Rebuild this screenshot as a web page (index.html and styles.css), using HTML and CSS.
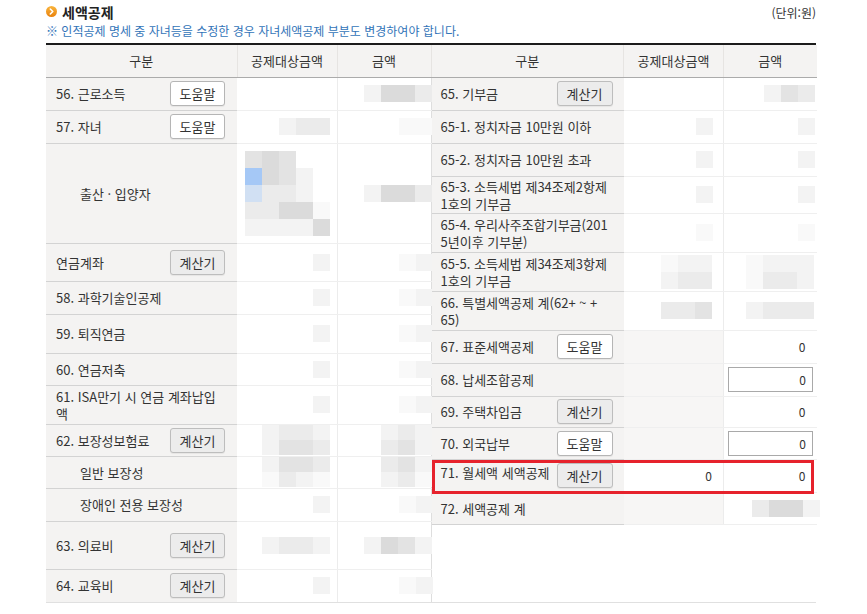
FILE: index.html
```html
<!DOCTYPE html>
<html lang="ko">
<head>
<meta charset="utf-8">
<title>세액공제</title>
<link rel="stylesheet" href="styles.css">
</head>
<body>
<div class="page">
  <div class="top">
    <div class="title">
      <svg class="ico" width="11" height="11" viewBox="0 0 11 11">
        <defs>
          <linearGradient id="og" x1="0" y1="0" x2="0" y2="1">
            <stop offset="0" stop-color="#f9b53e"/>
            <stop offset="1" stop-color="#e9820c"/>
          </linearGradient>
        </defs>
        <circle cx="5.5" cy="5.5" r="5.5" fill="url(#og)"/>
        <path d="M4.3 3 L6.8 5.5 L4.3 8" fill="none" stroke="#fff" stroke-width="1.6" stroke-linecap="round" stroke-linejoin="round"/>
      </svg>
      <span>세액공제</span>
    </div>
    <div class="unit">(단위:원)</div>
  </div>
  <div class="note">※ 인적공제 명세 중 자녀등을 수정한 경우 자녀세액공제 부분도 변경하여야 합니다.</div>

  <div class="grid">
    <table class="tbl left">
      <colgroup><col class="c-k"><col class="c-a"><col class="c-b"></colgroup>
      <thead>
        <tr><th>구분</th><th>공제대상금액</th><th>금액</th></tr>
      </thead>
      <tbody>
        <tr class="h33">
          <td class="k"><div class="lbl"><span>56. 근로소득</span><button class="btn">도움말</button></div></td>
          <td class="v"></td>
          <td class="v"><div class="mz c4 ml26"><i class="m1"></i><i class="m4"></i><i class="m4"></i><i class="m2"></i></div></td>
        </tr>
        <tr class="h33">
          <td class="k"><div class="lbl"><span>57. 자녀</span><button class="btn">도움말</button></div></td>
          <td class="v"><div class="mz c3 ml42"><i class="m1"></i><i class="m2"></i><i class="m2"></i></div></td>
          <td class="v"><div class="mz c2 ml61"><i class="m0"></i><i class="m0"></i></div></td>
        </tr>
        <tr class="h100">
          <td class="k ind">출산 · 입양자</td>
          <td class="v"><div class="mz c5 ml8">
            <i class="m3"></i><i class="m4"></i><i class="m3"></i><i></i><i></i>
            <i class="mb"></i><i class="m4"></i><i class="m3"></i><i class="m1"></i><i></i>
            <i class="mc"></i><i class="m2"></i><i class="m2"></i><i class="m1"></i><i></i>
            <i class="m2"></i><i class="m2"></i><i class="m4"></i><i class="m4"></i><i class="m0"></i>
            <i class="m1"></i><i class="m1"></i><i class="m1"></i><i class="m1"></i><i class="m4"></i>
          </div></td>
          <td class="v"><div class="mz c4 ml26"><i class="m1"></i><i class="m4"></i><i class="m4"></i><i class="m2"></i></div></td>
        </tr>
        <tr class="h38">
          <td class="k"><div class="lbl"><span>연금계좌</span><button class="btn calc">계산기</button></div></td>
          <td class="v"><div class="mz c1 ml76"><i class="m1"></i></div></td>
          <td class="v"><div class="mz c2 ml61"><i class="m0"></i><i class="m1"></i></div></td>
        </tr>
        <tr class="h33">
          <td class="k">58. 과학기술인공제</td>
          <td class="v"><div class="mz c1 ml76"><i class="m1"></i></div></td>
          <td class="v"><div class="mz c2 ml61"><i class="m0"></i><i class="m1"></i></div></td>
        </tr>
        <tr class="h39">
          <td class="k">59. 퇴직연금</td>
          <td class="v"><div class="mz c1 ml76"><i class="m1"></i></div></td>
          <td class="v"><div class="mz c2 ml61"><i class="m0"></i><i class="m1"></i></div></td>
        </tr>
        <tr class="h32">
          <td class="k">60. 연금저축</td>
          <td class="v"><div class="mz c1 ml76"><i class="m1"></i></div></td>
          <td class="v"><div class="mz c2 ml61"><i class="m0"></i><i class="m1"></i></div></td>
        </tr>
        <tr class="h39">
          <td class="k">61. ISA만기 시 연금 계좌납입<br>액</td>
          <td class="v"><div class="mz c1 ml76"><i class="m1"></i></div></td>
          <td class="v"><div class="mz c2 ml61"><i class="m0"></i><i class="m1"></i></div></td>
        </tr>
        <tr class="h32">
          <td class="k"><div class="lbl"><span>62. 보장성보험료</span><button class="btn calc">계산기</button></div></td>
          <td class="v"><div class="mz c4 ml25 r15"><i class="m1"></i><i class="m2"></i><i class="m2"></i><i class="m1"></i><i class="m1"></i><i class="m3"></i><i class="m3"></i><i class="m2"></i></div></td>
          <td class="v"><div class="mz c3 ml43 r15"><i class="m1"></i><i class="m2"></i><i class="m1"></i><i class="m2"></i><i class="m3"></i><i class="m1"></i></div></td>
        </tr>
        <tr class="h32">
          <td class="k ind">일반 보장성</td>
          <td class="v"><div class="mz c4 ml25 r15"><i class="m1"></i><i class="m3"></i><i class="m3"></i><i class="m2"></i><i class="m0"></i><i class="m2"></i><i class="m1"></i><i class="m0"></i></div></td>
          <td class="v"><div class="mz c3 ml43 r15"><i class="m2"></i><i class="m3"></i><i class="m1"></i><i class="m1"></i><i class="m2"></i><i class="m0"></i></div></td>
        </tr>
        <tr class="h33">
          <td class="k ind">장애인 전용 보장성</td>
          <td class="v"><div class="mz c1 ml76"><i class="m1"></i></div></td>
          <td class="v"><div class="mz c2 ml61"><i class="m0"></i><i class="m1"></i></div></td>
        </tr>
        <tr class="h48">
          <td class="k"><div class="lbl"><span>63. 의료비</span><button class="btn calc">계산기</button></div></td>
          <td class="v"><div class="mz c4 ml25"><i class="m1"></i><i class="m2"></i><i class="m2"></i><i class="m1"></i></div></td>
          <td class="v"><div class="mz c4 ml26"><i class="m1"></i><i class="m4"></i><i class="m3"></i><i class="m1"></i></div></td>
        </tr>
        <tr class="h33 last">
          <td class="k"><div class="lbl"><span>64. 교육비</span><button class="btn calc">계산기</button></div></td>
          <td class="v"><div class="mz c1 ml76"><i class="m1"></i></div></td>
          <td class="v"><div class="mz c2 ml61"><i class="m0"></i><i class="m1"></i></div></td>
        </tr>
      </tbody>
    </table>

    <div class="rpanel">
      <table class="tbl right">
        <colgroup><col class="c-k2"><col class="c-a"><col class="c-b2"></colgroup>
        <thead>
          <tr><th>구분</th><th>공제대상금액</th><th class="end">금액</th></tr>
        </thead>
        <tbody>
          <tr class="h33">
            <td class="k"><div class="lbl"><span>65. 기부금</span><button class="btn calc w56">계산기</button></div></td>
            <td class="v"></td>
            <td class="v end"><div class="mz c3 ml40"><i class="m1"></i><i class="m3"></i><i class="m2"></i></div></td>
          </tr>
          <tr class="h33">
            <td class="k">65-1. 정치자금 10만원 이하</td>
            <td class="v"><div class="mz c1 ml72"><i class="m1"></i></div></td>
            <td class="v end"><div class="mz c1 ml74"><i class="m1"></i></div></td>
          </tr>
          <tr class="h33">
            <td class="k">65-2. 정치자금 10만원 초과</td>
            <td class="v"><div class="mz c1 ml72"><i class="m1"></i></div></td>
            <td class="v end"><div class="mz c1 ml74"><i class="m1"></i></div></td>
          </tr>
          <tr class="h37">
            <td class="k">65-3. 소득세법 제34조제2항제<br>1호의 기부금</td>
            <td class="v"><div class="mz c1 ml72"><i class="m1"></i></div></td>
            <td class="v end"><div class="mz c1 ml74"><i class="m1"></i></div></td>
          </tr>
          <tr class="h39">
            <td class="k">65-4. 우리사주조합기부금(201<br>5년이후 기부분)</td>
            <td class="v"><div class="mz c1 ml72"><i class="m0"></i></div></td>
            <td class="v end"><div class="mz c1 ml74"><i class="m0"></i></div></td>
          </tr>
          <tr class="h39">
            <td class="k">65-5. 소득세법 제34조제3항제<br>1호의 기부금</td>
            <td class="v"><div class="mz c3 ml37"><i class="m0"></i><i class="m1"></i><i class="m1"></i><i class="m1"></i><i class="m2"></i><i class="m2"></i></div></td>
            <td class="v end"><div class="mz c4 ml22"><i class="m0"></i><i class="m1"></i><i class="m1"></i><i class="m1"></i><i class="m0"></i><i class="m2"></i><i class="m2"></i><i class="m1"></i></div></td>
          </tr>
          <tr class="h39">
            <td class="k">66. 특별세액공제 계(62+ ~ +<br>65)</td>
            <td class="v"><div class="mz c3 ml37"><i class="m2"></i><i class="m2"></i><i class="m3"></i></div></td>
            <td class="v end"><div class="mz c4 ml22"><i class="m1"></i><i class="m2"></i><i class="m2"></i><i class="m2"></i></div></td>
          </tr>
          <tr class="h33">
            <td class="k"><div class="lbl"><span>67. 표준세액공제</span><button class="btn w56">도움말</button></div></td>
            <td class="v dis"></td>
            <td class="v end num">0</td>
          </tr>
          <tr class="h33">
            <td class="k">68. 납세조합공제</td>
            <td class="v dis"></td>
            <td class="v end"><input class="inp" type="text" value="0"></td>
          </tr>
          <tr class="h31">
            <td class="k"><div class="lbl"><span>69. 주택차입금</span><button class="btn calc w56">계산기</button></div></td>
            <td class="v dis"></td>
            <td class="v end num">0</td>
          </tr>
          <tr class="h32">
            <td class="k"><div class="lbl"><span>70. 외국납부</span><button class="btn w56">도움말</button></div></td>
            <td class="v dis"></td>
            <td class="v end"><input class="inp" type="text" value="0"></td>
          </tr>
          <tr class="h33">
            <td class="k hlcell"><div class="lbl"><span class="up">71. 월세액 세액공제</span><button class="btn calc w56">계산기</button></div><div class="hl"></div></td>
            <td class="v num">0</td>
            <td class="v end num">0</td>
          </tr>
          <tr class="h32">
            <td class="k">72. 세액공제 계</td>
            <td class="v dis"></td>
            <td class="v end"><div class="mz c4 ml28"><i class="m2"></i><i class="m4"></i><i class="m4"></i><i class="m1"></i></div></td>
          </tr>
        </tbody>
      </table>
    </div>
  </div>
</div>
</body>
</html>
```

FILE: styles.css
```css
* { box-sizing: border-box; }

body {
  margin: 0;
  background: #fff;
  color: #333;
  font-family: "Noto Sans CJK KR", "Noto Sans", sans-serif;
}

.page {
  width: 770px;
  margin-left: 46px;
}

.top {
  display: flex;
  justify-content: space-between;
  align-items: center;
  height: 23px;
}

.title {
  display: flex;
  align-items: center;
  gap: 5px;
  font-size: 14px;
  font-weight: bold;
  color: #222;
  line-height: 18px;
}

.ico { display: block; flex: none; }

.unit {
  font-size: 12px;
  color: #333;
  line-height: 16px;
  padding-top: 3px;
}

.note {
  height: 20px;
  font-size: 12px;
  line-height: 16px;
  color: #3274b8;
}

.grid {
  display: flex;
  align-items: flex-start;
  border-top: 2px solid #1b1b1b;
  border-bottom: 1px solid #e0e0e0;
}

.tbl {
  border-collapse: collapse;
  table-layout: fixed;
  width: 385px;
  font-size: 13px;
}

.c-k { width: 191px; }
.c-k2 { width: 192px; }
.c-a { width: 100px; }
.c-b { width: 94px; }
.c-b2 { width: 93px; }

.tbl th {
  height: 32px;
  padding: 0;
  background: #f4f3f2;
  font-weight: normal;
  color: #333;
  border-bottom: 1px solid #ababab;
  border-right: 1px solid #e6e4e2;
}

.tbl th.end { border-right: 0; }

.tbl td {
  padding: 0;
  vertical-align: middle;
  line-height: 17px;
}

.tbl td.k {
  background: #f4f3f2;
  border-bottom: 1px solid #d3d3d3;
  padding: 0 12px 0 10px;
  color: #333;
  white-space: nowrap;
}

.right td.k { padding: 0 11px 0 9px; }

.tbl td.k.ind { padding-left: 34px; }

.tbl td.v {
  background: #fff;
  border-bottom: 1px solid #efefef;
  border-right: 1px solid #ececec;
}

.left td.v:last-child { border-right: 1px solid #dedede; }
.tbl td.v.end { border-right: 0; }
.tbl tr.last td { border-bottom: 0; }

.tbl td.dis { background: #f7f6f5; }

.tbl td.num {
  text-align: right;
  padding-right: 11px;
  font-size: 12px;
  color: #333;
}

.lbl {
  display: flex;
  align-items: center;
  justify-content: space-between;
}

.lbl .up { position: relative; top: -3px; }

.btn {
  flex: none;
  width: 55px;
  height: 25px;
  padding: 0;
  border: 1px solid #b5b5b5;
  border-radius: 3px;
  background: #fff;
  color: #333;
  font-family: inherit;
  font-size: 13px;
  line-height: 23px;
  box-shadow: 0 1px 1px rgba(0, 0, 0, 0.06);
}

.btn.calc { background: #ececec; border-color: #bdbdbd; }
.btn.w56 { width: 56px; }

.inp {
  display: block;
  width: 85px;
  height: 25px;
  margin: 0 4px;
  padding: 0 6px 0 0;
  border: 1px solid #a9a9a9;
  background: #fff;
  text-align: right;
  font-family: inherit;
  font-size: 12px;
  color: #333;
}

.h31 { height: 31px; }
.h32 { height: 32px; }
.h33 { height: 33px; }
.h37 { height: 37px; }
.h38 { height: 38px; }
.h39 { height: 39px; }
.h48 { height: 48px; }
.h100 { height: 100px; }

.rpanel {
  width: 385px;
  align-self: stretch;
}

.hlcell { position: relative; }

.hl {
  position: absolute;
  left: 0;
  top: 0;
  width: 382px;
  height: 34px;
  border: 3px solid #e6222c;
  pointer-events: none;
}

/* privacy mosaic */
.mz {
  display: grid;
  grid-auto-rows: 17px;
}
.mz.r15 { grid-auto-rows: 15px; }
.mz i { display: block; }
.c1 { grid-template-columns: repeat(1, 17px); }
.c2 { grid-template-columns: repeat(2, 17px); }
.c3 { grid-template-columns: repeat(3, 17px); }
.c4 { grid-template-columns: repeat(4, 17px); }
.c5 { grid-template-columns: repeat(5, 17px); }

.ml8 { margin-left: 8px; }
.ml22 { margin-left: 22px; }
.ml25 { margin-left: 25px; }
.ml26 { margin-left: 26px; }
.ml28 { margin-left: 28px; }
.ml37 { margin-left: 37px; }
.ml40 { margin-left: 40px; }
.ml42 { margin-left: 42px; }
.ml43 { margin-left: 43px; }
.ml61 { margin-left: 61px; }
.ml72 { margin-left: 72px; }
.ml74 { margin-left: 74px; }
.ml76 { margin-left: 76px; }

.m0 { background: #f9f9f9; }
.m1 { background: #f3f3f3; }
.m2 { background: #ebebeb; }
.m3 { background: #e3e3e3; }
.m4 { background: #dbdbdb; }
.mb { background: #a5c8f6; }
.mc { background: #d1e0f3; }
```
